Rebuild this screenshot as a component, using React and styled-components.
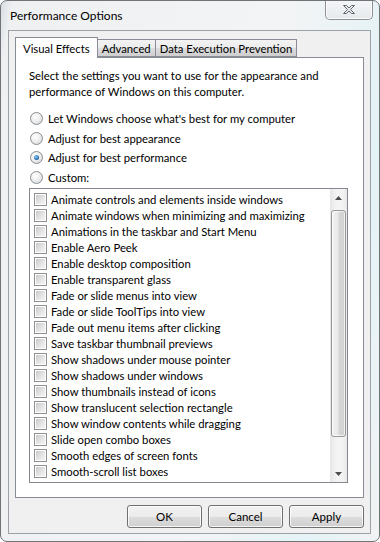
import React, { useState } from "react";
import styled, { createGlobalStyle } from "styled-components";

const GlobalStyle = createGlobalStyle`
  html, body {
    margin: 0;
    padding: 0;
    background: #ffffff;
  }
  body {
    font-family: Lato, "Open Sans", sans-serif;
    font-size: 11.3px;
    color: #000;
  }
`;

const Window = styled.div`
  box-sizing: border-box;
  width: 380px;
  height: 542px;
  border: 1px solid #6f7478;
  border-radius: 7px;
  background: linear-gradient(100deg, #d9dde2 0px, #eef0f2 12px, #f3f4f5 60%, #e4f3f6 85%, #f2f3f4 100%);
  display: flex;
  flex-direction: column;
  overflow: hidden;
`;

const TitleBar = styled.div`
  height: 29px;
  display: flex;
  align-items: flex-start;
  justify-content: space-between;
  padding-left: 9px;
  padding-right: 6px;
`;

const Title = styled.div`
  font-size: 12px;
  margin-top: 7px;
  color: #000;
`;

const CloseButton = styled.div`
  box-sizing: border-box;
  width: 48px;
  height: 20px;
  margin-top: -1px;
  border: 1px solid #8d9196;
  border-top: none;
  border-radius: 0 0 5px 5px;
  background: linear-gradient(#f4f6f8, #e6e9ec);
  box-shadow: inset 0 0 0 1px rgba(255, 255, 255, 0.8);
  display: flex;
  align-items: center;
  justify-content: center;
`;

const Client = styled.div`
  box-sizing: border-box;
  margin: 0 8px 0 7px;
  height: 504px;
  border: 1px solid #9ba1a7;
  background: #f0f0f0;
  padding: 6px 6px 0 6px;
  display: flex;
  flex-direction: column;
`;

const TabRow = styled.div`
  display: flex;
  align-items: flex-end;
  height: 20px;
  position: relative;
  z-index: 1;
`;

const Tab = styled.div`
  box-sizing: border-box;
  height: ${(p) => (p.$active ? "21px" : "18px")};
  padding: 0 ${(p) => (p.$active ? "7px" : "4px")};
  margin-bottom: ${(p) => (p.$active ? "-1px" : "0")};
  border: 1px solid #898c95;
  border-bottom: ${(p) => (p.$active ? "none" : "1px solid #898c95")};
  margin-left: ${(p) => (p.$first ? "0" : "-1px")};
  background: ${(p) =>
    p.$active ? "#ffffff" : "linear-gradient(#f3f3f3, #ebebeb 50%, #dddddd 51%, #cfcfcf)"};
  display: flex;
  align-items: center;
  white-space: nowrap;
`;

const Panel = styled.div`
  box-sizing: border-box;
  width: 349px;
  height: 441px;
  border: 1px solid #898c95;
  background: #ffffff;
  padding: 10px 0 0 13px;
  display: flex;
  flex-direction: column;
`;

const Intro = styled.p`
  margin: 0;
  line-height: 16px;
  width: 320px;
`;

const RadioGroup = styled.div`
  display: flex;
  flex-direction: column;
  margin-top: 9px;
`;

const RadioRow = styled.label`
  display: flex;
  align-items: center;
  height: 19.5px;
  gap: 5px;
`;

const RadioCircle = styled.span`
  box-sizing: border-box;
  width: 13px;
  height: 13px;
  border-radius: 50%;
  border: 1px solid #8a8e93;
  background: radial-gradient(circle at 40% 35%, #ffffff 0%, #f1f1f1 40%, #cfd2d5 100%);
  display: flex;
  align-items: center;
  justify-content: center;
  flex-shrink: 0;
  margin-left: 1px;
`;

const RadioDot = styled.span`
  width: 5px;
  height: 5px;
  border-radius: 50%;
  background: radial-gradient(circle at 40% 35%, #8ad0f5, #1f63a7 70%, #16467a);
`;

const ListBox = styled.div`
  box-sizing: border-box;
  margin-top: 1px;
  width: 319px;
  height: 295px;
  border: 1px solid #828790;
  display: flex;
`;

const ListItems = styled.div`
  flex: 1;
  padding: 2px 0 0 4px;
  display: flex;
  flex-direction: column;
`;

const ItemRow = styled.label`
  display: flex;
  align-items: center;
  height: 16px;
  gap: 4px;
  white-space: nowrap;
`;

const CheckBox = styled.span`
  box-sizing: border-box;
  width: 13px;
  height: 13px;
  border: 1px solid #8f8f8f;
  background: #fff;
  padding: 1px;
  flex-shrink: 0;
  display: flex;
  &::after {
    content: "";
    flex: 1;
    background: linear-gradient(135deg, #cbcbcb, #e6e6e6 60%, #f4f4f4);
  }
`;

const ScrollBar = styled.div`
  width: 17px;
  background: linear-gradient(90deg, #e6e6e6, #f4f4f4 40%, #f4f4f4 70%, #e9e9e9);
  display: flex;
  flex-direction: column;
  align-items: center;
`;

const ArrowBox = styled.div`
  width: 17px;
  height: 17px;
  display: flex;
  align-items: center;
  justify-content: center;
`;

const Thumb = styled.div`
  box-sizing: border-box;
  width: 15px;
  height: 227px;
  margin-top: 4px;
  border: 1px solid #979797;
  border-radius: 3px;
  background: linear-gradient(90deg, #f3f3f3, #e8e8e8 45%, #d6d6d6 55%, #d0d0d0);
  box-shadow: inset 0 0 0 1px rgba(255, 255, 255, 0.7);
`;

const Track = styled.div`
  flex: 1;
`;

const ButtonRow = styled.div`
  display: flex;
  justify-content: flex-end;
  gap: 6px;
  margin-top: 7px;
`;

const Button = styled.button`
  box-sizing: border-box;
  width: 75px;
  height: 23px;
  border: 1px solid #707070;
  border-radius: 3px;
  background: linear-gradient(#f2f2f2, #ebebeb 50%, #dddddd 51%, #cfcfcf);
  box-shadow: inset 0 0 0 1px rgba(255, 255, 255, 0.8);
  font-family: Lato, "Open Sans", sans-serif;
  font-size: 11.5px;
  color: #000;
  padding: 0;
`;

const options = [
  "Let Windows choose what's best for my computer",
  "Adjust for best appearance",
  "Adjust for best performance",
  "Custom:",
];

const effects = [
  "Animate controls and elements inside windows",
  "Animate windows when minimizing and maximizing",
  "Animations in the taskbar and Start Menu",
  "Enable Aero Peek",
  "Enable desktop composition",
  "Enable transparent glass",
  "Fade or slide menus into view",
  "Fade or slide ToolTips into view",
  "Fade out menu items after clicking",
  "Save taskbar thumbnail previews",
  "Show shadows under mouse pointer",
  "Show shadows under windows",
  "Show thumbnails instead of icons",
  "Show translucent selection rectangle",
  "Show window contents while dragging",
  "Slide open combo boxes",
  "Smooth edges of screen fonts",
  "Smooth-scroll list boxes",
];

const CloseIcon = () => (
  <svg width="14" height="11" viewBox="0 0 14 11">
    <path
      d="M1.5 1.5 H4.5 L7 4 L9.5 1.5 H12.5 L8.5 5.5 L12.5 9.5 H9.5 L7 7 L4.5 9.5 H1.5 L5.5 5.5 Z"
      fill="#e9ecef"
      stroke="#5f656b"
      strokeWidth="1"
      strokeLinejoin="round"
    />
  </svg>
);

const Arrow = ({ up }) => (
  <svg width="7" height="4" viewBox="0 0 7 4">
    <path d={up ? "M0 4 L3.5 0 L7 4 Z" : "M0 0 L3.5 4 L7 0 Z"} fill="#4d4d4d" />
  </svg>
);

export default function App() {
  const [choice, setChoice] = useState(2);

  return (
    <>
      <GlobalStyle />
      <Window>
        <TitleBar>
          <Title>Performance Options</Title>
          <CloseButton>
            <CloseIcon />
          </CloseButton>
        </TitleBar>
        <Client>
          <TabRow>
            <Tab $active $first>Visual Effects</Tab>
            <Tab>Advanced</Tab>
            <Tab>Data Execution Prevention</Tab>
          </TabRow>
          <Panel>
            <Intro>
              Select the settings you want to use for the appearance and
              performance of Windows on this computer.
            </Intro>
            <RadioGroup>
              {options.map((o, i) => (
                <RadioRow key={o} onClick={() => setChoice(i)}>
                  <RadioCircle>{choice === i && <RadioDot />}</RadioCircle>
                  {o}
                </RadioRow>
              ))}
            </RadioGroup>
            <ListBox>
              <ListItems>
                {effects.map((e) => (
                  <ItemRow key={e}>
                    <CheckBox />
                    {e}
                  </ItemRow>
                ))}
              </ListItems>
              <ScrollBar>
                <ArrowBox>
                  <Arrow up />
                </ArrowBox>
                <Thumb />
                <Track />
                <ArrowBox>
                  <Arrow />
                </ArrowBox>
              </ScrollBar>
            </ListBox>
          </Panel>
          <ButtonRow>
            <Button>OK</Button>
            <Button>Cancel</Button>
            <Button>Apply</Button>
          </ButtonRow>
        </Client>
      </Window>
    </>
  );
}
